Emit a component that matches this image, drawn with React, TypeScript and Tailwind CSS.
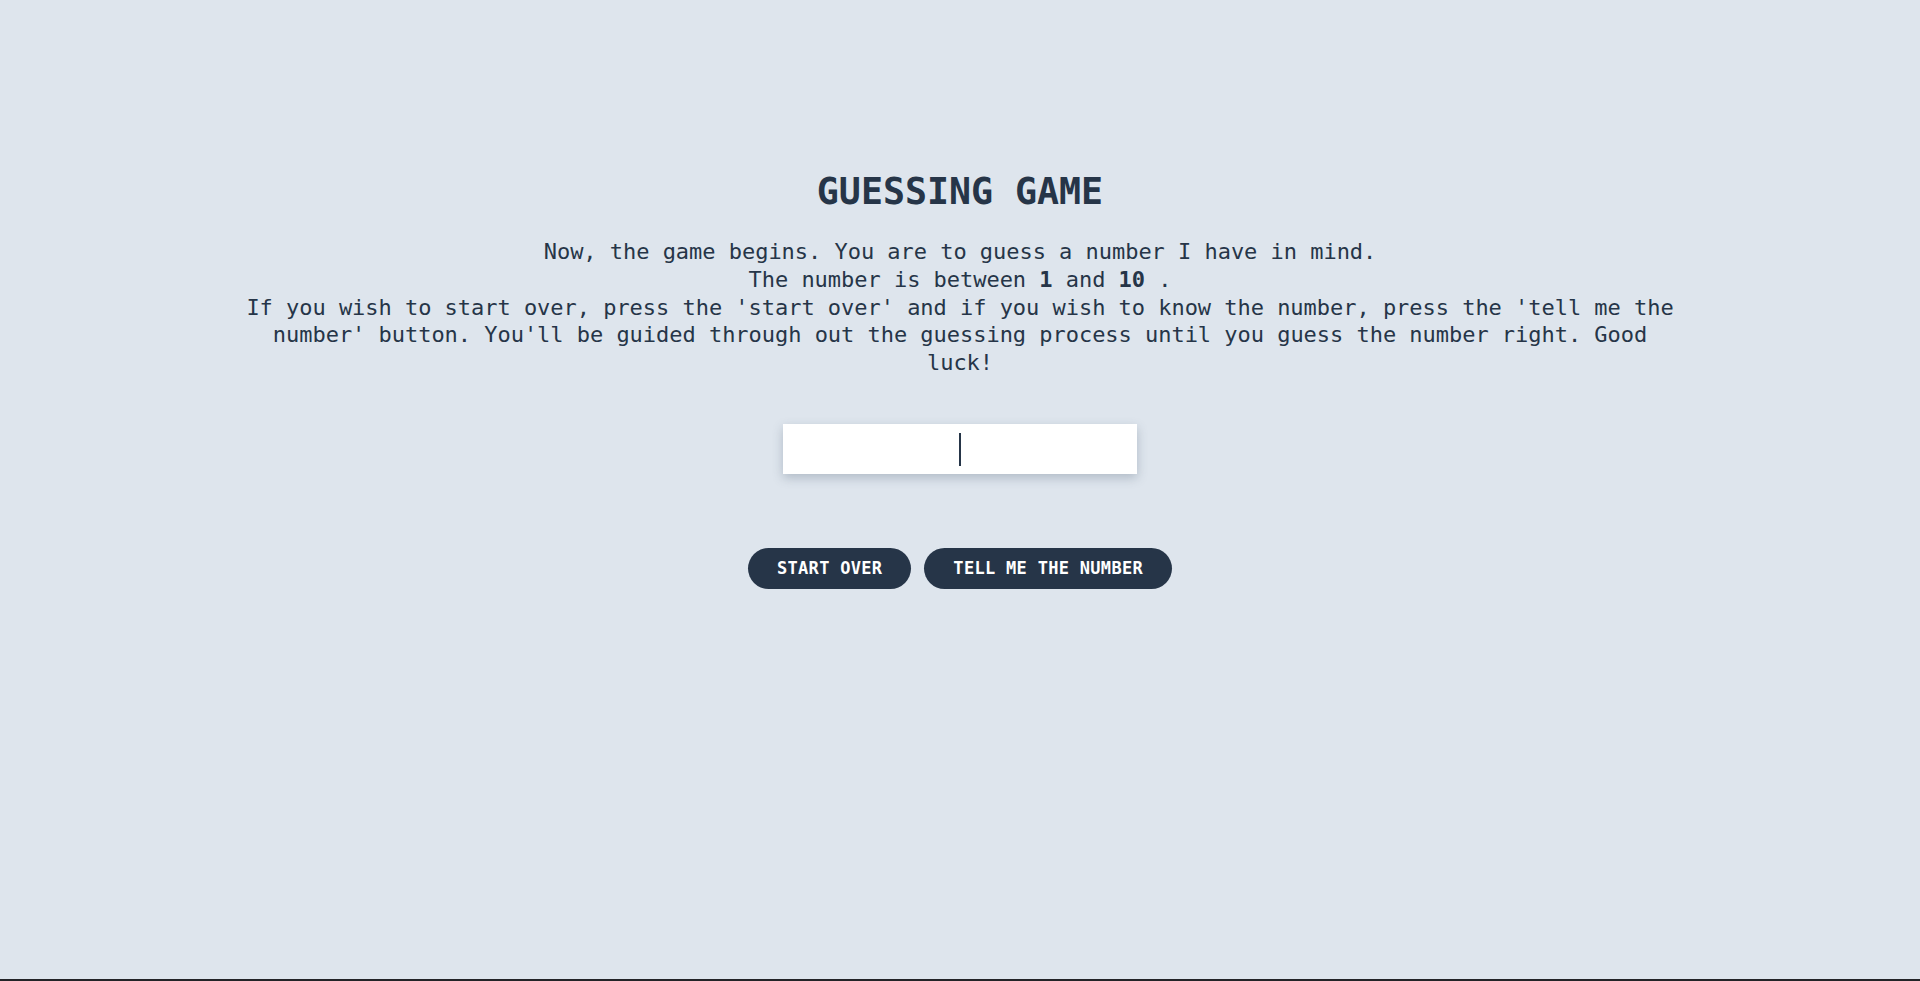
import React from "react";

export default function App() {
  return (
    <div
      className="relative flex h-[981px] w-full flex-col items-center overflow-hidden bg-[#dee5ed] text-[#263548]"
      style={{ fontFamily: '"DejaVu Sans Mono", "Liberation Mono", monospace' }}
    >
      <h1 className="mt-[172px] text-[36.6px] font-bold leading-[40px]">GUESSING GAME</h1>
      <p className="mt-[26px] w-[1440px] text-center text-[22px] leading-[27.8px] tracking-[-0.03px]">
        Now, the game begins. You are to guess a number I have in mind.
        <br />
        The number is between <b>1</b> and <b>10</b> .
        <br />
        If you wish to start over, press the 'start over' and if you wish to know the number, press the 'tell me the
        number' button. You'll be guided through out the guessing process until you guess the number right. Good luck!
      </p>
      <div className="relative mt-[47px] h-[50px] w-[354px] bg-white shadow-[0_4px_10px_rgba(60,80,100,0.28)]">
        <input
          type="text"
          aria-label="guess"
          className="h-full w-full bg-transparent text-center text-[28px] outline-none"
        />
        <div className="pointer-events-none absolute left-[176px] top-[9px] h-[33px] w-[2px] bg-[#263548]" />
      </div>
      <div className="mt-[74px] flex gap-[13px]">
        <button className="h-[41px] rounded-full bg-[#263548] px-[29px] text-[17px] font-bold tracking-[0.3px] text-white">
          START OVER
        </button>
        <button className="h-[41px] rounded-full bg-[#263548] px-[29px] text-[17px] font-bold tracking-[0.3px] text-white">
          TELL ME THE NUMBER
        </button>
      </div>
      <div className="absolute bottom-0 left-0 h-[2px] w-full bg-[#222327]" />
    </div>
  );
}
